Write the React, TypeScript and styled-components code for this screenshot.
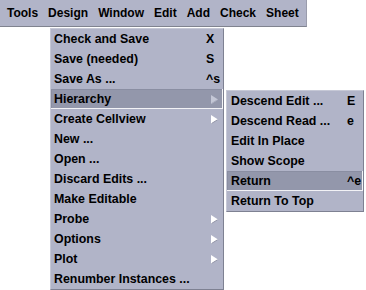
import React from "react";
import styled, { createGlobalStyle } from "styled-components";

const Global = createGlobalStyle`
  html, body { margin: 0; padding: 0; background: #ffffff; }
  body { font-family: "Liberation Sans", Arial, sans-serif; }
`;

const BG = "#b1b4c8";
const HL = "#9397ab";

const Page = styled.div`
  width: 366px;
  height: 290px;
  overflow: hidden;
  background: #fff;
  font-family: "Liberation Sans", Arial, sans-serif;
  font-weight: bold;
  font-size: 12px;
  color: #000;
`;

const MenuBar = styled.div`
  display: flex;
  width: 304px;
  height: 26px;
  align-items: center;
  padding-left: 2px;
  box-sizing: content-box;
  background: ${BG};
  border-bottom: 1px solid #80838f;
  border-right: 1px solid #9a9cac;
`;

const BarItem = styled.span`
  padding: 0 5px;
  line-height: 26px;
`;

const DropArea = styled.div`
  display: flex;
  align-items: flex-start;
  padding-left: 50px;
  margin-top: 1px;
`;

const Menu = styled.div<{ $width: number; $top?: number; $left?: number }>`
  width: ${(p) => p.$width}px;
  box-sizing: border-box;
  background: ${BG};
  border-top: 1px solid #c6c8d6;
  border-left: 1px solid #c6c8d6;
  border-right: 1px solid #7e8192;
  border-bottom: 1px solid #7e8192;
  margin-top: ${(p) => p.$top ?? 0}px;
  margin-left: ${(p) => p.$left ?? 0}px;
  font-size: 12.4px;
`;

const Item = styled.div<{ $active?: boolean; $pad: number; $accel: number }>`
  display: grid;
  grid-template-columns: 1fr ${(p) => p.$accel}px;
  align-items: center;
  height: 20px;
  padding-left: ${(p) => p.$pad}px;
  background: ${(p) => (p.$active ? HL : "transparent")};
  box-shadow: ${(p) =>
    p.$active ? "inset -1px -1px 0 #f2f2f6, inset 1px 1px 0 #8a8ea2" : "none"};
  white-space: nowrap;
`;

const Label = styled.span``;

const Accel = styled.span`
  display: flex;
  align-items: center;
`;

const ArrowWrap = styled.span`
  display: flex;
  margin-left: 5px;
`;

function Arrow({ faded }: { faded?: boolean }) {
  return (
    <ArrowWrap>
      <svg width="7" height="9" viewBox="0 0 7 9">
        <polygon
          points="0,0 7,4.5 0,9"
          fill={faded ? "#c4c7d6" : "#ffffff"}
        />
        <polyline
          points="0.5,8.5 6.5,4.8"
          fill="none"
          stroke={faded ? "#a9acbe" : "#8d90a4"}
          strokeWidth="1"
        />
      </svg>
    </ArrowWrap>
  );
}

type Entry = { label: string; accel?: string; sub?: boolean; active?: boolean };

const mainItems: Entry[] = [
  { label: "Check and Save", accel: "X" },
  { label: "Save (needed)", accel: "S" },
  { label: "Save As ...", accel: "^s" },
  { label: "Hierarchy", sub: true, active: true },
  { label: "Create Cellview", sub: true },
  { label: "New ..." },
  { label: "Open ..." },
  { label: "Discard Edits ..." },
  { label: "Make Editable" },
  { label: "Probe", sub: true },
  { label: "Options", sub: true },
  { label: "Plot", sub: true },
  { label: "Renumber Instances ..." },
];

const subItems: Entry[] = [
  { label: "Descend Edit ...", accel: "E" },
  { label: "Descend Read ...", accel: "e" },
  { label: "Edit In Place" },
  { label: "Show Scope" },
  { label: "Return", accel: "^e", active: true },
  { label: "Return To Top" },
];

const bar = ["Tools", "Design", "Window", "Edit", "Add", "Check", "Sheet"];

export default function App() {
  return (
    <Page>
      <Global />
      <MenuBar>
        {bar.map((b) => (
          <BarItem key={b}>{b}</BarItem>
        ))}
      </MenuBar>
      <DropArea>
        <Menu $width={174}>
          {mainItems.map((it) => (
            <Item key={it.label} $active={it.active} $pad={3} $accel={17}>
              <Label>{it.label}</Label>
              <Accel>
                {it.accel}
                {it.sub && <Arrow faded={it.active} />}
              </Accel>
            </Item>
          ))}
        </Menu>
        <Menu $width={138} $top={62} $left={2}>
          {subItems.map((it) => (
            <Item key={it.label} $active={it.active} $pad={4} $accel={16}>
              <Label>{it.label}</Label>
              <Accel>{it.accel}</Accel>
            </Item>
          ))}
        </Menu>
      </DropArea>
    </Page>
  );
}
